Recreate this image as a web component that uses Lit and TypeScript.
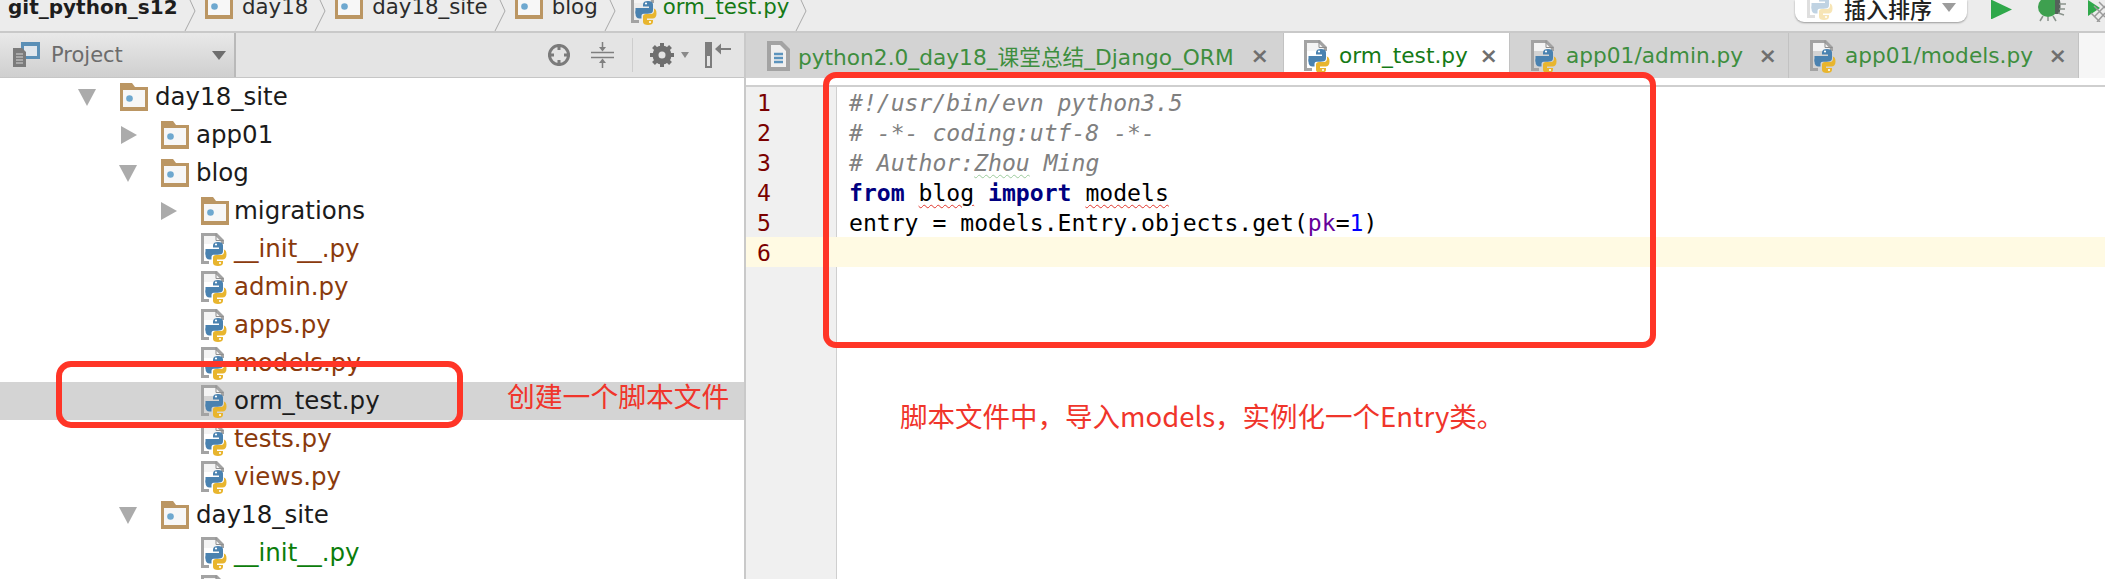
import { LitElement, html, css, svg } from "lit";
import { customElement } from "lit/decorators.js";

const pyIcon = (faded = false) => html`<svg class="ico ${faded ? "faded" : ""}" viewBox="0 0 28 34" width="28" height="34">
  ${svg`<path d="M1 1H17L24 8V12H4V29H9V32H1Z" fill="#a3a3a3"/>
  <path d="M4 4H15.500L21 9.500V12H4Z" fill="#f4f4f4"/>
  <path d="M16 1.500V8.500H23.500" fill="none" stroke="#8e8e8e" stroke-width="1"/>
  <path d="M8 22.500C8 17.500 10 17 15 17H19V15.500H13V13.500C13 11 15 10 18 10C21 10 23 11 23 13.500V19C23 21 22 22.500 19.500 22.500H14C12.500 22.500 11.500 23.500 11.500 25V27.500H9.500C7 27.500 5.500 26 5.500 22.500C5.500 18.500 7 17 9.500 17H15" fill="#4a82b0"/>
  <rect x="5.500" y="17" width="13" height="5.500" fill="#4a82b0"/>
  <circle cx="16" cy="12.500" r="1.100" fill="#fff"/>
  <path d="M26.500 22.500C26.500 26 25 27.500 22.500 27.500H17V29H23V31C23 33 21 34 18 34C15 34 13 33 13 31V25.500C13 24 14 23 16 23H21C23 23 24 21.500 24 20V17.500H23C25.500 17.500 26.500 19 26.500 22.500Z" fill="#e8b52e"/>
  <circle cx="20" cy="31" r="1.100" fill="#fff"/>`}
</svg>`;

const folderIcon = html`<svg class="ico" viewBox="0 0 28 28" width="28" height="28">
  ${svg`<path d="M0 0H12L15 4H28V28H0Z" fill="#bb9663"/>
  <rect x="3" y="7" width="22" height="17" fill="#f7f7f7"/>
  <circle cx="9.500" cy="15.500" r="3.300" fill="#6ea8cf"/>`}
</svg>`;

const arrowDown = html`<span class="arrow down"></span>`;
const arrowRight = html`<span class="arrow right"></span>`;

interface Row {
  depth: number;
  kind: "folder" | "py";
  open?: boolean;
  name: string;
  tone?: string;
  selected?: boolean;
}

const rows: Row[] = [
  { depth: 0, kind: "folder", open: true, name: "day18_site" },
  { depth: 1, kind: "folder", open: false, name: "app01" },
  { depth: 1, kind: "folder", open: true, name: "blog" },
  { depth: 2, kind: "folder", open: false, name: "migrations" },
  { depth: 2, kind: "py", name: "__init__.py", tone: "brown" },
  { depth: 2, kind: "py", name: "admin.py", tone: "brown" },
  { depth: 2, kind: "py", name: "apps.py", tone: "brown" },
  { depth: 2, kind: "py", name: "models.py", tone: "brown" },
  { depth: 2, kind: "py", name: "orm_test.py", selected: true },
  { depth: 2, kind: "py", name: "tests.py", tone: "brown" },
  { depth: 2, kind: "py", name: "views.py", tone: "brown" },
  { depth: 1, kind: "folder", open: true, name: "day18_site" },
  { depth: 2, kind: "py", name: "__init__.py", tone: "green" },
  { depth: 2, kind: "py", name: "" },
];

const chevron = html`<svg class="chev" viewBox="0 0 12 31" width="12" height="31">
  ${svg`<path d="M6 0L11 11L1 31" fill="none" stroke="#a9a9a9" stroke-width="1"/>`}
</svg>`;

@customElement("app-root")
export class AppRoot extends LitElement {
  static styles = css`
    :host {
      display: block;
      position: relative;
      width: 2105px;
      height: 579px;
      overflow: hidden;
      background: #fff;
      font-family: "DejaVu Sans", "Noto Sans CJK SC", sans-serif;
    }
    .ico { display: block; flex: none; }
    .faded { opacity: 0.35; }
    .topbar {
      height: 31px;
      box-sizing: border-box;
      background: #ececec;
      display: flex;
      align-items: flex-start;
      position: relative;
      overflow: hidden;
      padding-left: 8px;
    }
    .rule { height: 2px; background: #c9c9c9; }
    .crumb {
      display: flex;
      align-items: flex-start;
      flex: none;
    }
    .crumb-text {
      font-size: 21.300px;
      line-height: 28px;
      margin-top: -7px;
      color: #2b2b2b;
      white-space: nowrap;
    }
    .crumb-text.root { font-weight: 700; font-size: 20px; color: #1d1d1d; width: 170px; }
    .crumb-text.file { color: #157a15; }
    .crumb .ico { margin-top: -9px; margin-right: 9px; }
    .crumb.py { margin-left: 5px; }
    .crumb.py .ico { margin-right: 5px; }
    .chev { display: block; flex: none; margin: 0 9px 0 6px; }
    .tools {
      margin-left: auto;
      display: flex;
      align-items: flex-start;
      height: 31px;
    }
    .combo {
      box-sizing: border-box;
      width: 172px;
      height: 22px;
      background: #fff;
      border-radius: 0 0 9px 9px;
      box-shadow: 0 1px 2px #9a9a9a;
      display: flex;
      align-items: center;
      padding-left: 11px;
      overflow: hidden;
    }
    .combo .ico { margin-top: -16px; margin-right: 10px; }
    .combo-text {
      font-family: "Noto Sans CJK SC", sans-serif;
      font-size: 22px;
      font-weight: 500;
      line-height: 22px;
      margin-top: -7px;
      color: #222;
      white-space: nowrap;
    }
    .combo .caret {
      width: 0; height: 0; margin-left: 10px; margin-top: -8px;
      border-left: 7px solid transparent;
      border-right: 7px solid transparent;
      border-top: 9px solid #9c9c9c;
    }
    .tools svg.tool { display: block; flex: none; }
    .tool.run { margin-left: 24px; }
    .tool.debug { margin-left: 24px; }
    .tool.cover { margin-left: 21px; }
    .main { display: flex; height: 546px; }
    .left { width: 744px; flex: none; display: flex; flex-direction: column; }
    .sep { width: 2px; flex: none; background: #c9c9c9; }
    .right { flex: 1; display: flex; flex-direction: column; min-width: 0; }

    .phead {
      height: 44px;
      flex: none;
      display: flex;
      align-items: center;
      background: #e4e4e4;
      border-bottom: 1px solid #c6c6c6;
    }
    .ptab {
      box-sizing: border-box;
      width: 236px;
      height: 44px;
      display: flex;
      align-items: center;
      padding-left: 13px;
      background: linear-gradient(#e9e9e9, #cfcfcf);
      border-right: 2px solid #b9b9b9;
    }
    .ptab > svg { display: block; flex: none; }
    .ptab-label {
      margin-left: 11px;
      font-size: 21px;
      color: #6c6c6c;
      flex: 1;
    }
    .ptab .caret {
      width: 0; height: 0; margin-right: 8px;
      border-left: 7px solid transparent;
      border-right: 7px solid transparent;
      border-top: 9px solid #6e6e6e;
    }
    .pactions {
      flex: 1;
      display: flex;
      align-items: center;
      padding-left: 311px;
    }
    .pactions svg { display: block; flex: none; }
    .a-collapse { margin-left: 20px; }
    .a-div { margin-left: 18px; }
    .a-gear { margin-left: 16px; }
    .a-caret { margin-left: 7px; }
    .a-hide { margin-left: 16px; }
    .tree { flex: 1; overflow: hidden; }
    .row {
      height: 38px;
      display: flex;
      align-items: center;
      box-sizing: border-box;
      white-space: nowrap;
      font-size: 24.500px;
      color: #1b1b1b;
    }
    .row.selected { background: #d4d4d4; }
    .row .name { margin-left: 7px; margin-top: -2px; }
    .row.brown .name { color: #8a3a0c; }
    .row.green .name { color: #0b7d0b; }
    .arrow { width: 20px; height: 20px; flex: none; margin-right: 22px; position: relative; }
    .arrow.down::before {
      content: ""; display: block; width: 0; height: 0; margin-top: 2px;
      border-left: 9px solid transparent;
      border-right: 9px solid transparent;
      border-top: 17px solid #ababab;
    }
    .arrow.right::before {
      content: ""; display: block; width: 0; height: 0; margin-left: 2px; margin-top: 1px;
      border-top: 9px solid transparent;
      border-bottom: 9px solid transparent;
      border-left: 16px solid #ababab;
    }
    .pad-0 { padding-left: 78px; }
    .pad-1 { padding-left: 119px; }
    .pad-2 { padding-left: 159px; }
    .pad-2 .name { margin-left: 5px; }
    .row.file { padding-left: 200px; }
    .row.file .name { margin-left: 6px; }

    .tabs {
      height: 45px;
      flex: none;
      display: flex;
      background: #f6f6f6;
    }
    .tab {
      box-sizing: border-box;
      flex: none;
      height: 45px;
      display: flex;
      align-items: center;
      background: #d3d3d3;
      border-right: 1px solid #c2c2c2;
      padding-left: 20px;
      font-size: 21.700px;
      color: #3e8e3e;
      white-space: nowrap;
    }
    .tab > svg { display: block; flex: none; }
    .tab.active { background: #fff; color: #157a15; padding-left: 19px; }
    .tab .label { margin-left: 8px; flex: 1; }
    .tab.doc { width: 538px; }
    .tab.orm { width: 226px; }
    .tab.admin { width: 279px; }
    .tab.models { width: 290px; }
    .x { color: #6f6f6f; font-weight: 700; font-size: 22px; margin-right: 11px; }
    .tab.doc .x { margin-right: 14px; }
    .gap { height: 7px; flex: none; background: #fff; }
    .line { height: 2px; flex: none; background: #cfcfcf; }
    .editor {
      flex: 1;
      display: grid;
      grid-template-columns: 90px 1fr;
      grid-auto-rows: 30px;
      font-family: "DejaVu Sans Mono", monospace;
      font-size: 23.100px;
      line-height: 30px;
      position: relative;
      background: linear-gradient(90deg, #f0f0f0 90px, #cfcfcf 90px, #cfcfcf 91px, #fff 91px);
    }
    .ln, .code { box-sizing: border-box; padding-top: 1px; }
    .ln { padding-left: 11px; color: #7a0000; }
    .code { padding-left: 13px; color: #000; white-space: pre; }
    .cur { background: #fffae3; }
    .c { color: #808080; font-style: italic; }
    .k { color: #000080; font-weight: 700; }
    .p { color: #660099; }
    .n { color: #0000ff; }
    .wr { text-decoration: underline wavy #e0352b 1px; text-underline-offset: 3px; }
    .wg { text-decoration: underline wavy #9ccb9c 1px; text-underline-offset: 3px; }

    .box {
      position: absolute;
      box-sizing: border-box;
      border: 6px solid #ff3527;
      border-radius: 13px;
      pointer-events: none;
    }
    .box.a { left: 823px; top: 72px; width: 833px; height: 276px; }
    .box.b { left: 56px; top: 361px; width: 407px; height: 67px; border-radius: 15px; }
    .note {
      position: absolute;
      color: #f0352b;
      font-family: "Noto Sans CJK SC", sans-serif;
      white-space: nowrap;
      font-size: 27.500px;
      line-height: 36px;
    }
    .note.a { left: 507px; top: 377px; font-size: 27.800px; }
    .note.b { left: 900px; top: 397px; }
  `;

  private folder(r: Row) {
    return html`<div class="row pad-${r.depth}">
      ${r.open ? arrowDown : arrowRight}${folderIcon}<span class="name">${r.name}</span>
    </div>`;
  }

  private file(r: Row) {
    return html`<div class="row file ${r.tone ?? ""} ${r.selected ? "selected" : ""}">
      ${pyIcon()}<span class="name">${r.name}</span>
    </div>`;
  }

  render() {
    const gutter = [1, 2, 3, 4, 5, 6];
    const lines = [
      html`<span class="c">#!/usr/bin/evn python3.5</span>`,
      html`<span class="c"># -*- coding:utf-8 -*-</span>`,
      html`<span class="c"># Author:<span class="wg">Zhou</span> Ming</span>`,
      html`<span class="k">from</span> <span class="wr">blog</span> <span class="k">import</span> <span class="wr">models</span>`,
      html`entry = models.Entry.objects.get(<span class="p">pk</span>=<span class="n">1</span>)`,
      html``,
    ];
    return html`
      <div class="topbar">
        <div class="crumb"><span class="crumb-text root">git_python_s12</span>${chevron}</div>
        <div class="crumb">${folderIcon}<span class="crumb-text">day18</span>${chevron}</div>
        <div class="crumb">${folderIcon}<span class="crumb-text">day18_site</span>${chevron}</div>
        <div class="crumb">${folderIcon}<span class="crumb-text">blog</span>${chevron}</div>
        <div class="crumb py">${pyIcon()}<span class="crumb-text file">orm_test.py</span>${chevron}</div>
        <div class="tools">
          <div class="combo">
            ${pyIcon(true)}
            <span class="combo-text">插入排序</span><span class="caret"></span>
          </div>
          <svg class="tool run" width="22" height="20" viewBox="0 0 22 20"><path d="M0 0H1L21 9.500L1 19H0Z" fill="#2fa84a"/></svg>
          <svg class="tool debug" width="30" height="22" viewBox="0 0 30 22">
            <ellipse cx="11" cy="7" rx="10" ry="10" fill="#3ea04f"/>
            <path d="M18 -2H22C24 1 24 10 22 14H18Z" fill="#55625a"/>
            <path d="M22 4H29M22 9H28M21 13L27 15M6 16L3 21M11 17V21M16 16L19 21" stroke="#8a938c" stroke-width="1.500" fill="none"/>
          </svg>
          <svg class="tool cover" width="17" height="22" viewBox="0 0 17 22">
            <path d="M0 0L12 8L0 16Z" fill="#2fa84a"/>
            <path d="M6 6L17 17M11 2L17 8M3 13L12 22M17 6L6 17M17 13L9 22" stroke="#9a9a9a" stroke-width="1.500" fill="none"/>
          </svg>
        </div>
      </div>
      <div class="rule"></div>
      <div class="main">
        <div class="left">
          <div class="phead">
            <div class="ptab">
              <svg width="27" height="26" viewBox="0 0 27 26">
                <rect x="8" y="0" width="19" height="17" fill="#5a8fb6"/>
                <rect x="11" y="4" width="13" height="10" fill="#dfe6ec"/>
                <path d="M0 6H9L13 10V25H0Z" fill="#7b7b7b"/>
                <path d="M3 12H10M3 15H10M3 18H10M3 21H10" stroke="#d8d8d8" stroke-width="1.200"/>
              </svg>
              <span class="ptab-label">Project</span><span class="caret"></span>
            </div>
            <div class="pactions">
              <svg width="24" height="24" viewBox="0 0 24 24">
                <circle cx="12" cy="12" r="9.500" fill="none" stroke="#7b7b7b" stroke-width="3"/>
                <path d="M12 1V7M12 17V23M1 12H7M17 12H23" stroke="#7b7b7b" stroke-width="3"/>
              </svg>
              <svg class="a-collapse" width="23" height="26" viewBox="0 0 23 26">
                <path d="M0 10.500H23M0 15.500H23" stroke="#7f7f7f" stroke-width="1.500"/>
                <path d="M11.500 0V7" stroke="#7f7f7f" stroke-width="1.500"/><path d="M8 5H15L11.500 9.500Z" fill="#7f7f7f"/>
                <path d="M11.500 19V26" stroke="#7f7f7f" stroke-width="1.500"/><path d="M8 21H15L11.500 16.500Z" fill="#7f7f7f"/>
              </svg>
              <svg class="a-div" width="2" height="34" viewBox="0 0 2 34"><rect width="1" height="34" fill="#cdcdcd"/></svg>
              <svg class="a-gear" width="24" height="24" viewBox="0 0 24 24">
                <circle cx="12" cy="12" r="6.500" fill="none" stroke="#6f6f6f" stroke-width="6"/>
                <path d="M12 0V24M0 12H24M3.500 3.500L20.500 20.500M20.500 3.500L3.500 20.500" stroke="#6f6f6f" stroke-width="4"/>
                <circle cx="12" cy="12" r="3.500" fill="#e4e4e4"/>
              </svg>
              <svg class="a-caret" width="8" height="6" viewBox="0 0 8 6"><path d="M0 0H8L4 6Z" fill="#8a8a8a"/></svg>
              <svg class="a-hide" width="26" height="26" viewBox="0 0 26 26">
                <rect x="0" y="0" width="7" height="26" fill="#7d7d7d"/>
                <rect x="2" y="14" width="3" height="10" fill="#e4e4e4"/>
                <path d="M11 7H26" stroke="#7d7d7d" stroke-width="2"/>
                <path d="M16 1.500L10 7L16 12.500Z" fill="#7d7d7d"/>
              </svg>
            </div>
          </div>
          <div class="tree">
            ${rows.map((r) => (r.kind === "folder" ? this.folder(r) : this.file(r)))}
          </div>
        </div>
        <div class="sep"></div>
        <div class="right">
          <div class="tabs">
            <div class="tab doc">
              <svg width="24" height="30" viewBox="0 0 24 30">
                <path d="M1 0H16L24 8V30H1Z" fill="#a3a3a3"/>
                <path d="M5 4H14L20 10V26H5Z" fill="#efefef"/>
                <path d="M8 13H17M8 17H17M8 21H17" stroke="#5b93bd" stroke-width="2.500"/>
              </svg>
              <span class="label">python2.0_day18_课堂总结_Django_ORM</span><span class="x">×</span>
            </div>
            <div class="tab active orm">${pyIcon()}<span class="label">orm_test.py</span><span class="x">×</span></div>
            <div class="tab admin">${pyIcon()}<span class="label">app01/admin.py</span><span class="x">×</span></div>
            <div class="tab models">${pyIcon()}<span class="label">app01/models.py</span><span class="x">×</span></div>
          </div>
          <div class="gap"></div>
          <div class="line"></div>
          <div class="editor">
            ${gutter.map(
              (n, i) => html`<div class="ln ${n === 6 ? "cur" : ""}">${n}</div>
                <div class="code ${n === 6 ? "cur" : ""}">${lines[i]}</div>`
            )}
          </div>
        </div>
      </div>
      <div class="box a"></div>
      <div class="box b"></div>
      <div class="note a">创建一个脚本文件</div>
      <div class="note b">脚本文件中，导入models，实例化一个Entry类。</div>
    `;
  }
}
